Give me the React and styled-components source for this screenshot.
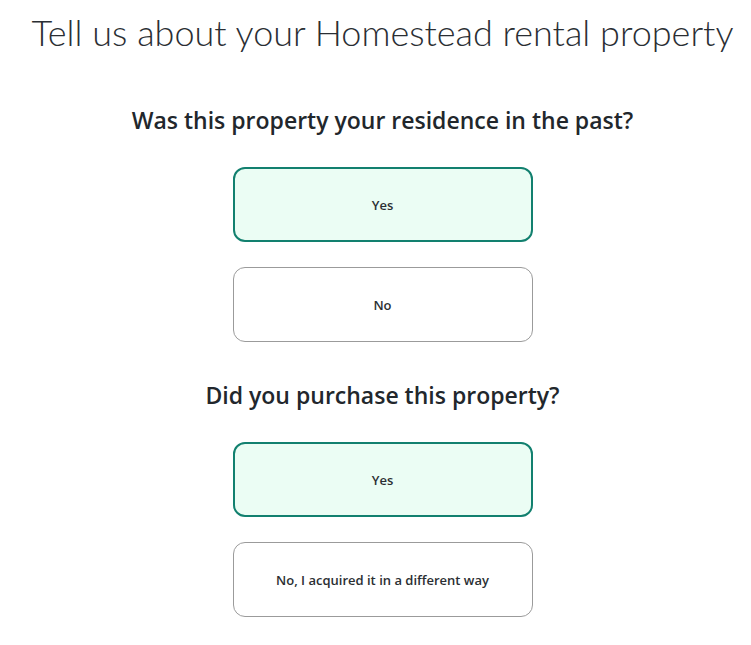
import React from "react";
import styled, { createGlobalStyle } from "styled-components";

const Global = createGlobalStyle`
  body {
    margin: 0;
    background: #ffffff;
    font-family: "Lato", "Open Sans", sans-serif;
    color: #242a30;
  }
`;

const Page = styled.div`
  display: flex;
  flex-direction: column;
  align-items: center;
  padding-left: 14px;
  padding-top: 9px;
`;

const Title = styled.h1`
  margin: 0;
  font-family: "Lato", sans-serif;
  font-size: 36px;
  font-weight: 300;
  line-height: 46px;
  white-space: nowrap;
  color: #2a2e33;
`;

const Question = styled.h2`
  margin: ${(p) => p.$top}px 0 0;
  font-family: "Open Sans", sans-serif;
  font-size: 23px;
  font-weight: 600;
  line-height: 30px;
  color: #22272c;
`;

const Options = styled.div`
  display: flex;
  flex-direction: column;
  gap: 25px;
  margin-top: 32px;
`;

const Option = styled.button`
  width: 300px;
  height: 75px;
  box-sizing: border-box;
  border-radius: 12px;
  border: ${(p) => (p.$selected ? "2px solid #12806f" : "1px solid #9b9b9b")};
  background: ${(p) => (p.$selected ? "#ebfdf4" : "#ffffff")};
  font-family: "Open Sans", sans-serif;
  font-size: 13px;
  font-weight: 600;
  color: #2b2f33;
  cursor: pointer;
`;

export default function App() {
  return (
    <>
      <Global />
      <Page>
        <Title>Tell us about your Homestead rental property</Title>
        <Question $top={50}>Was this property your residence in the past?</Question>
        <Options>
          <Option $selected>Yes</Option>
          <Option>No</Option>
        </Options>
        <Question $top={38}>Did you purchase this property?</Question>
        <Options>
          <Option $selected>Yes</Option>
          <Option>No, I acquired it in a different way</Option>
        </Options>
      </Page>
    </>
  );
}
